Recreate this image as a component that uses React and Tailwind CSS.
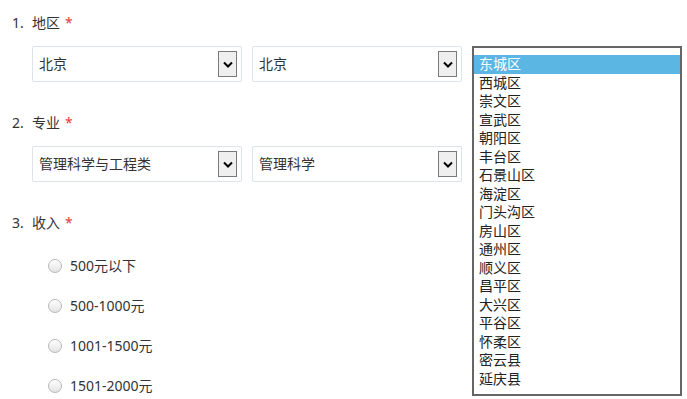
import React from "react";

const districts = [
  "东城区", "西城区", "崇文区", "宣武区", "朝阳区", "丰台区", "石景山区", "海淀区", "门头沟区",
  "房山区", "通州区", "顺义区", "昌平区", "大兴区", "平谷区", "怀柔区", "密云县", "延庆县",
];

const incomes = ["500元以下", "500-1000元", "1001-1500元", "1501-2000元"];

const font = { fontFamily: '"Noto Sans", "Noto Sans CJK SC", sans-serif' };

// Heading like "1. 地区 *"
const Question = ({ num, label }) => (
  <div className="flex items-center h-[20px] text-[14px] leading-[20px] text-[#333]">
    <span className="w-[20px]">{num}.</span>
    <span>{label}</span>
    <span className="ml-[5px] text-[#e4393c]">*</span>
  </div>
);

const Select = ({ value, children }) => (
  <div className="relative w-[210px] h-[36px] border border-[#dde3e9] rounded-[2px] bg-white flex items-center justify-between pl-[6px] pr-[4px]">
    <span className="text-[14px] leading-[20px] text-[#333]">{value}</span>
    <span className="w-[19px] h-[26px] border border-[#7a7a7a] bg-[#efefef] flex items-center justify-center">
      <svg width="10" height="7" viewBox="0 0 10 7">
        <polyline points="1,1.5 5,5.5 9,1.5" fill="none" stroke="#000" strokeWidth="2" />
      </svg>
    </span>
    {children}
  </div>
);

const App = () => {
  return (
    <div className="w-[687px] h-[399px] bg-white overflow-hidden pl-[12px] pt-[13px]" style={font}>
      <Question num="1" label="地区" />
      <div className="flex gap-[10px] mt-[13px] ml-[20px]">
        <Select value="北京" />
        <Select value="北京">
          {/* open dropdown list */}
          <div className="absolute left-[219px] top-[-1px] w-[210px] h-[350px] border-2 border-[#666] bg-white pt-[7px]">
            {districts.map((d, i) => (
              <div
                key={d}
                className={`h-[18.5px] leading-[18.5px] pl-[5px] text-[14px] ${i === 0 ? "bg-[#5bb6e3] text-white" : "text-[#222]"}`}
              >
                {d}
              </div>
            ))}
          </div>
        </Select>
      </div>

      <div className="mt-[31px]">
        <Question num="2" label="专业" />
      </div>
      <div className="flex gap-[10px] mt-[13px] ml-[20px]">
        <Select value="管理科学与工程类" />
        <Select value="管理科学" />
      </div>

      <div className="mt-[31px]">
        <Question num="3" label="收入" />
      </div>
      <div className="mt-[13px] ml-[36px]">
        {incomes.map((t) => (
          <div key={t} className="flex items-center h-[40px] gap-[8px]">
            <span className="w-[14px] h-[14px] rounded-full border border-[#b8b8b8] bg-linear-to-b from-white to-[#e4e4e4]" />
            <span className="text-[14px] leading-[20px] text-[#333]">{t}</span>
          </div>
        ))}
      </div>
    </div>
  );
};

export default App;
